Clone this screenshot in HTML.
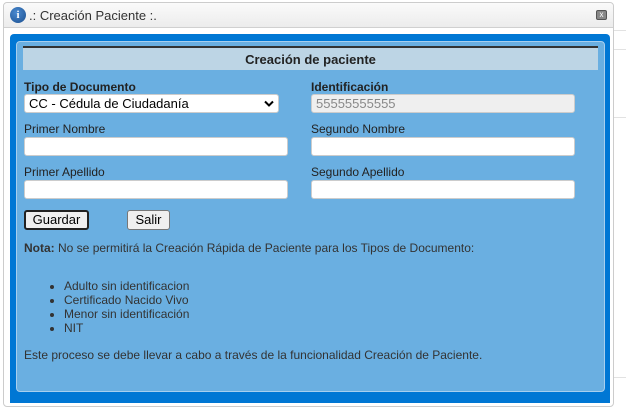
<!DOCTYPE html>
<html><head><meta charset="utf-8"><style>
*{box-sizing:border-box}
body{margin:0;width:626px;height:409px;background:#fff;font-family:"Liberation Sans",Arial,sans-serif;position:relative;overflow:hidden;font-size:12px;color:#333}
.hl{position:absolute;left:614px;right:0;height:1px;background:#e2e2e2}
.dlg{position:absolute;left:3px;top:2px;width:611px;height:405px;border:1px solid #ccc;border-radius:4px;background:#fff}
.title{position:absolute;left:0;top:0;width:609px;height:25px;background:linear-gradient(#fafafa,#ececec);border-bottom:1px solid #d0d0d0;border-radius:4px 4px 0 0}
.title span{position:absolute;left:25px;top:5px;font-size:13px;color:#333}
.ico{position:absolute;left:6px;top:4px;width:16px;height:16px;border-radius:50%;background:radial-gradient(circle at 40% 35%,#4a8ad0,#1b4f8f);color:#fff;font:bold 11px "Liberation Serif",serif;text-align:center;line-height:16px}
.x{position:absolute;right:6px;top:7px;width:11px;height:10px;border:1px solid #555;border-radius:2px;background:#888;color:#fff;font-size:8px;line-height:8px;text-align:center}
.outer{position:absolute;left:10px;top:34px;width:600px;height:369px;background:#0077d4;border-radius:4px 4px 0 0}
.inner{position:absolute;left:16px;top:41px;width:589px;height:351px;background:#6aafe1;border:1px solid #a8cfee;border-radius:4px}
.hdr{position:absolute;left:23px;top:46px;width:575px;height:24px;background:#bdd5e5;border-top:2px solid #333;text-align:center;font-weight:bold;font-size:13px;line-height:23px;color:#222}
.lbl{position:absolute;font-size:12px;color:#222}
.b{font-weight:bold}
.inp{position:absolute;height:19px;background:#fff;border:1px solid #ccc;border-radius:3px;font-size:13px;padding-left:4px;line-height:17px}
.btn{position:absolute;top:210px;height:20px;background:#efefef;border:1px solid #777;border-radius:3px;font-size:13px;text-align:center;line-height:18px;color:#000}
.t{position:absolute;left:24px;font-size:12px;color:#333}
ul{position:absolute;left:24px;top:279px;margin:0;padding-left:40px;font-size:12px;line-height:14px;color:#333}
</style></head><body>
<div class="hl" style="top:30px"></div><div class="hl" style="top:49px"></div><div class="hl" style="top:117px"></div><div class="hl" style="top:377px"></div>
<div class="dlg"><div class="title"><div class="ico">i</div><span>.: Creación Paciente :.</span><div class="x">x</div></div></div>
<div class="outer"></div>
<div class="inner"></div>
<div class="hdr">Creación de paciente</div>
<div class="lbl b" style="left:24px;top:80px">Tipo de Documento</div>
<div class="inp" style="left:24px;top:94px;width:255px;color:#000">CC - Cédula de Ciudadanía<svg style="position:absolute;right:4px;top:5px" width="10" height="7" viewBox="0 0 10 7"><path d="M1 1.5L5 5.5L9 1.5" stroke="#000" stroke-width="2" fill="none"/></svg></div>
<div class="lbl b" style="left:311px;top:80px">Identificación</div>
<div class="inp" style="left:311px;top:94px;width:264px;background:#efefef;color:#888">55555555555</div>
<div class="lbl" style="left:24px;top:122px">Primer Nombre</div>
<div class="inp" style="left:24px;top:137px;width:264px"></div>
<div class="lbl" style="left:311px;top:122px">Segundo Nombre</div>
<div class="inp" style="left:311px;top:137px;width:264px"></div>
<div class="lbl" style="left:24px;top:165px">Primer Apellido</div>
<div class="inp" style="left:24px;top:180px;width:264px"></div>
<div class="lbl" style="left:311px;top:165px">Segundo Apellido</div>
<div class="inp" style="left:311px;top:180px;width:264px"></div>
<div class="btn" style="left:24px;width:65px;border:2px solid #222;line-height:16px">Guardar</div>
<div class="btn" style="left:127px;width:43px">Salir</div>
<div class="t" style="top:241px"><b>Nota:</b> No se permitirá la Creación Rápida de Paciente para los Tipos de Documento:</div>
<ul><li>Adulto sin identificacion</li><li>Certificado Nacido Vivo</li><li>Menor sin identificación</li><li>NIT</li></ul>
<div class="t" style="top:348px">Este proceso se debe llevar a cabo a través de la funcionalidad Creación de Paciente.</div>
</body></html>
